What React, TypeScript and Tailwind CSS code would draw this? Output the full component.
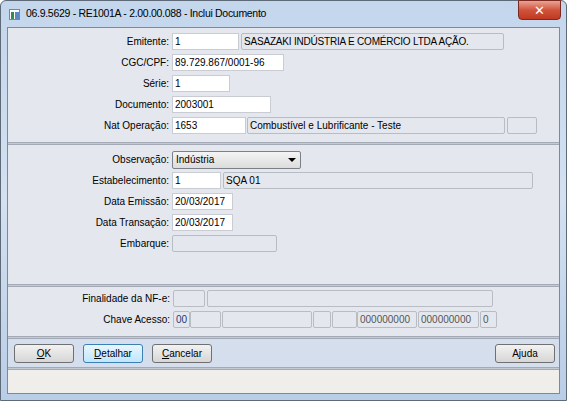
import React from "react";

const font = { fontFamily: "'Liberation Sans', Arial, sans-serif" };

function Label({ children, w = "w-[164px]" }: { children: React.ReactNode; w?: string }) {
  return <div className={`${w} shrink-0 pr-[3px] text-right text-[10px] leading-none whitespace-nowrap text-black`}>{children}</div>;
}

function Input({ value, w }: { value?: string; w: string }) {
  return (
    <div
      className={`${w} h-[17px] shrink-0 overflow-hidden border border-[#c9ccd2] bg-white px-[2px] text-[10px] leading-[15px] whitespace-nowrap text-black`}
    >
      {value}
    </div>
  );
}

function Box({ value, w, color = "text-black", extra = "" }: { value?: string; w: string; color?: string; extra?: string }) {
  return (
    <div
      className={`${w} h-[17px] shrink-0 overflow-hidden rounded-[2px] border border-[#b8bcc3] bg-[#e4e7ee] px-[2px] text-[10px] leading-[15px] whitespace-nowrap ${color} ${extra}`}
    >
      {value}
    </div>
  );
}

function Row({ children }: { children: React.ReactNode }) {
  return <div className="flex h-[21px] items-center">{children}</div>;
}

function Separator() {
  return <div className="h-[3px] border-y border-[#a3aab5] bg-[#c4cad3]" />;
}

function Button({ label, u, focused }: { label: string; u?: number; focused?: boolean }) {
  return (
    <div
      className={`flex h-[19px] w-[60px] items-center justify-center rounded-[3px] border text-[10px] text-black ${
        focused
          ? "border-[#3c7fb1] bg-gradient-to-b from-[#eaf6fd] to-[#bee6fd]"
          : "border-[#707070] bg-gradient-to-b from-[#f2f2f2] to-[#d6d6d6]"
      }`}
    >
      {u === undefined ? (
        <span>{label}</span>
      ) : (
        <span>
          {label.slice(0, u)}
          <span className="underline">{label.slice(u, u + 1)}</span>
          {label.slice(u + 1)}
        </span>
      )}
    </div>
  );
}

export default function App() {
  return (
    <div className="h-[401px] w-[567px] overflow-hidden bg-white" style={font}>
      <div className="flex h-[401px] w-[567px] flex-col rounded-t-[6px] border border-[#5e6a78] bg-gradient-to-b from-[#c4d6ec] via-[#d3e1f1] to-[#b9cde6]">
        {/* title bar */}
        <div className="relative flex h-[26px] shrink-0 items-center pl-[8px]">
          <div className="mr-[6px] flex h-[11px] w-[11px] border border-[#7b8794] bg-white">
            <div className="mt-[2px] ml-[1px] h-[7px] w-[3px] bg-[#2f8f4a]" />
            <div className="mt-[2px] ml-[1px] h-[7px] w-[4px] bg-[#5b87c6]" />
          </div>
          <span className="text-[10.5px] tracking-[-0.3px] text-black">
            06.9.5629 - RE1001A - 2.00.00.088 - Inclui Documento
          </span>
          <div className="absolute top-[-1px] right-[5px] flex h-[20px] w-[43px] items-center justify-center rounded-b-[4px] border border-[#7a2a22] bg-gradient-to-b from-[#e8a493] via-[#d0533c] to-[#c1391f]">
            <span className="text-[13px] font-bold leading-none text-white" style={{ fontFamily: "'DejaVu Sans', sans-serif" }}>
              ✕
            </span>
          </div>
        </div>

        {/* client area */}
        <div className="mx-[6px] flex flex-1 flex-col border border-[#7d8898] bg-[#e4e7ee]">
          {/* panel 1 */}
          <div className="flex h-[114px] flex-col pt-[3px]">
            <Row>
              <Label>Emitente:</Label>
              <Input value="1" w="w-[67px]" />
              <div className="w-[2px]" />
              <Box value="SASAZAKI INDÚSTRIA E COMÉRCIO LTDA AÇÃO." w="w-[263px]" extra="tracking-[-0.2px]" />
            </Row>
            <Row>
              <Label>CGC/CPF:</Label>
              <Input value="89.729.867/0001-96" w="w-[112px]" />
            </Row>
            <Row>
              <Label>Série:</Label>
              <Input value="1" w="w-[58px]" />
            </Row>
            <Row>
              <Label>Documento:</Label>
              <Input value="2003001" w="w-[99px]" />
            </Row>
            <Row>
              <Label>Nat Operação:</Label>
              <Input value="1653" w="w-[74px]" />
              <div className="w-[1px]" />
              <Box value="Combustível e Lubrificante - Teste" w="w-[258px]" />
              <div className="w-[2px]" />
              <Box w="w-[30px]" />
            </Row>
          </div>
          <Separator />

          {/* panel 2 */}
          <div className="flex h-[139px] flex-col pt-[4px]">
            <Row>
              <Label>Observação:</Label>
              <div className="flex h-[18px] w-[129px] items-center justify-between rounded-[2px] border border-[#7b8089] bg-gradient-to-b from-[#f4f4f4] to-[#dcdcdc] pr-[4px] pl-[3px] text-[10px] text-black">
                <span>Indústria</span>
                <span className="h-0 w-0 border-x-[4px] border-t-[4px] border-x-transparent border-t-black" />
              </div>
            </Row>
            <Row>
              <Label>Estabelecimento:</Label>
              <Input value="1" w="w-[49px]" />
              <div className="w-[2px]" />
              <Box value="SQA 01" w="w-[310px]" />
            </Row>
            <Row>
              <Label>Data Emissão:</Label>
              <Input value="20/03/2017" w="w-[61px]" />
            </Row>
            <Row>
              <Label>Data Transação:</Label>
              <Input value="20/03/2017" w="w-[61px]" />
            </Row>
            <Row>
              <Label>Embarque:</Label>
              <Box w="w-[105px]" />
            </Row>
          </div>
          <Separator />

          {/* panel 3 */}
          <div className="flex h-[49px] flex-col pt-[1px]">
            <Row>
              <Label w="w-[165px]">Finalidade da NF-e:</Label>
              <Box w="w-[32px]" />
              <div className="w-[2px]" />
              <Box w="w-[286px]" />
            </Row>
            <Row>
              <Label w="w-[165px]">Chave Acesso:</Label>
              <Box value="00" w="w-[17px]" color="text-[#1f3a78]" />
              <Box w="w-[31px]" />
              <div className="w-[1px]" />
              <Box w="w-[90px]" />
              <div className="w-[1px]" />
              <Box w="w-[18px]" />
              <div className="w-[1px]" />
              <Box w="w-[25px]" />
              <Box value="000000000" w="w-[60px]" color="text-[#555]" />
              <div className="w-[1px]" />
              <Box value="000000000" w="w-[61px]" color="text-[#555]" />
              <div className="w-[1px]" />
              <Box value="0" w="w-[17px]" color="text-[#555]" />
            </Row>
          </div>
          <Separator />

          {/* button bar */}
          <div className="flex h-[28px] items-center bg-[#d5deec] pr-[4px] pl-[6px]">
            <div className="flex gap-[9px]">
              <Button label="OK" u={0} />
              <Button label="Detalhar" u={0} focused />
              <Button label="Cancelar" u={0} />
            </div>
            <div className="flex-1" />
            <Button label="Ajuda" />
          </div>
          <Separator />

          {/* status bar */}
          <div className="flex-1 bg-[#f0eeeb]" />
        </div>
        <div className="h-[6px] shrink-0" />
      </div>
    </div>
  );
}
